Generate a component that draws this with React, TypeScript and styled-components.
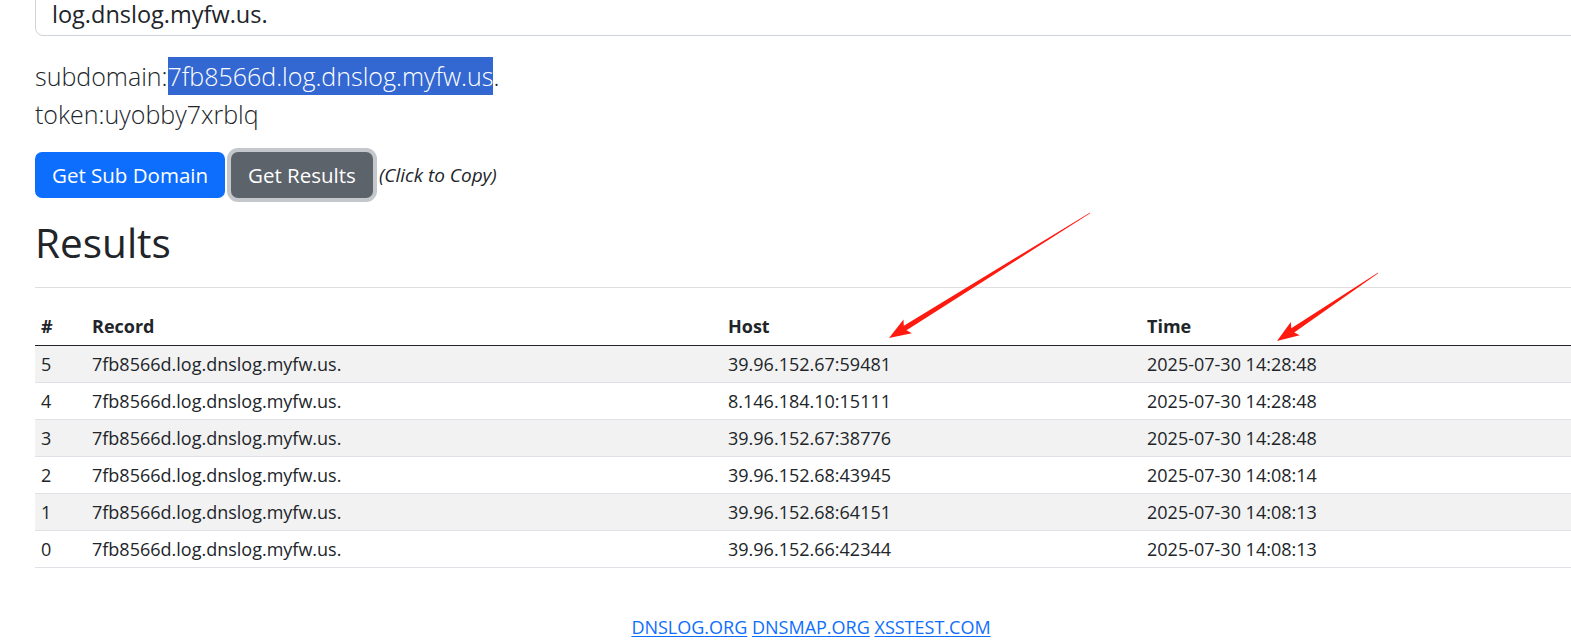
import React from "react";
import styled, { createGlobalStyle } from "styled-components";

const GlobalStyle = createGlobalStyle`
  html, body {
    margin: 0;
    padding: 0;
    background: #ffffff;
    overflow: hidden;
  }
  body {
    font-family: "Open Sans", "Noto Sans", "Segoe UI", sans-serif;
    font-size: 18px;
    color: #212529;
  }
  * { box-sizing: border-box; }
`;

const Page = styled.div`
  position: relative;
  display: flow-root;
  width: 1622px;
  min-height: 642px;
  padding: 0 35px;
`;

const DomainInput = styled.div`
  margin-top: -8px;
  height: 44px;
  border: 1px solid #ced4da;
  border-radius: 8px;
  padding: 0 16px;
  display: flex;
  align-items: center;
  font-size: 23.5px;
  color: #212529;
`;

const Lead = styled.div`
  margin-top: 21px;
  font-size: 25px;
  font-weight: 300;
  line-height: 38px;
  color: #212529;
`;

const Selected = styled.span`
  display: inline-block;
  background: #3367d1;
  color: #ffffff;
  line-height: 38px;
`;

const ButtonRow = styled.div`
  margin-top: 19px;
  display: flex;
  align-items: center;
  gap: 6px;
`;

const Button = styled.button<{ $variant: "primary" | "secondary" }>`
  height: 46px;
  padding: 0 17px;
  border: none;
  border-radius: 7px;
  font-family: inherit;
  font-size: 20.5px;
  color: #ffffff;
  background: ${(p) => (p.$variant === "primary" ? "#0d6efd" : "#5c636a")};
  box-shadow: ${(p) =>
    p.$variant === "secondary" ? "0 0 0 4px #c4c7cb" : "none"};
  cursor: pointer;
`;

const Hint = styled.em`
  font-size: 19px;
  font-style: italic;
`;

const Heading = styled.h1`
  margin: 20px 0 0;
  font-size: 40.5px;
  font-weight: 400;
  line-height: 49px;
`;

const Rule = styled.hr`
  margin: 20px 0 0;
  border: none;
  border-top: 1px solid #dedede;
`;

const Table = styled.table`
  margin-top: 19px;
  width: 100%;
  border-collapse: collapse;
  table-layout: fixed;
`;

const HeadCell = styled.th<{ $w: number }>`
  width: ${(p) => p.$w}px;
  height: 38px;
  padding: 0 6px;
  text-align: left;
  font-weight: 700;
  vertical-align: middle;
  border-bottom: 1px solid #212529;
`;

const Row = styled.tr<{ $striped: boolean }>`
  background: ${(p) => (p.$striped ? "#f2f2f2" : "#ffffff")};
  border-bottom: 1px solid #dee2e6;
`;

const Cell = styled.td`
  height: 37px;
  padding: 0 6px;
  vertical-align: middle;
  white-space: nowrap;
`;

const Footer = styled.div`
  margin-top: 46px;
  text-align: center;
  font-size: 18px;
  line-height: 27px;
`;

const FooterLink = styled.a`
  color: #0d6efd;
  text-decoration: underline;
  text-underline-offset: 2px;
`;

const Overlay = styled.svg`
  position: absolute;
  left: 0;
  top: 0;
  pointer-events: none;
`;

type Pt = [number, number];

function arrowPoints(tail: Pt, tip: Pt): string {
  const dx = tip[0] - tail[0];
  const dy = tip[1] - tail[1];
  const len = Math.hypot(dx, dy);
  const ux = dx / len;
  const uy = dy / len;
  const nx = -uy;
  const ny = ux;
  const headLen = 19;
  const headW = 8;
  const shaftW = 2.6;
  const bx = tip[0] - ux * headLen;
  const by = tip[1] - uy * headLen;
  const pts: Pt[] = [
    [tail[0] + nx * 0.3, tail[1] + ny * 0.3],
    [bx + nx * shaftW, by + ny * shaftW],
    [bx - ux * 3 + nx * headW, by - uy * 3 + ny * headW],
    tip,
    [bx - ux * 3 - nx * headW, by - uy * 3 - ny * headW],
    [bx - nx * shaftW, by - ny * shaftW],
    [tail[0] - nx * 0.3, tail[1] - ny * 0.3],
  ];
  return pts.map((p) => `${p[0].toFixed(1)},${p[1].toFixed(1)}`).join(" ");
}

const rows = [
  { id: 5, host: "39.96.152.67:59481", time: "2025-07-30 14:28:48" },
  { id: 4, host: "8.146.184.10:15111", time: "2025-07-30 14:28:48" },
  { id: 3, host: "39.96.152.67:38776", time: "2025-07-30 14:28:48" },
  { id: 2, host: "39.96.152.68:43945", time: "2025-07-30 14:08:14" },
  { id: 1, host: "39.96.152.68:64151", time: "2025-07-30 14:08:13" },
  { id: 0, host: "39.96.152.66:42344", time: "2025-07-30 14:08:13" },
];

export default function App() {
  return (
    <>
      <GlobalStyle />
      <Page>
        <DomainInput>log.dnslog.myfw.us.</DomainInput>
        <Lead>
          <div>
            subdomain:<Selected>7fb8566d.log.dnslog.myfw.us</Selected>.
          </div>
          <div>token:uyobby7xrblq</div>
        </Lead>
        <ButtonRow>
          <Button $variant="primary">Get Sub Domain</Button>
          <Button $variant="secondary">Get Results</Button>
          <Hint>(Click to Copy)</Hint>
        </ButtonRow>
        <Heading>Results</Heading>
        <Rule />
        <Table>
          <thead>
            <tr>
              <HeadCell $w={51}>#</HeadCell>
              <HeadCell $w={636}>Record</HeadCell>
              <HeadCell $w={419}>Host</HeadCell>
              <HeadCell $w={446}>Time</HeadCell>
            </tr>
          </thead>
          <tbody>
            {rows.map((r, i) => (
              <Row key={r.id} $striped={i % 2 === 0}>
                <Cell>{r.id}</Cell>
                <Cell>7fb8566d.log.dnslog.myfw.us.</Cell>
                <Cell>{r.host}</Cell>
                <Cell>{r.time}</Cell>
              </Row>
            ))}
          </tbody>
        </Table>
        <Footer>
          <FooterLink href="#">DNSLOG.ORG</FooterLink>{" "}
          <FooterLink href="#">DNSMAP.ORG</FooterLink>{" "}
          <FooterLink href="#">XSSTEST.COM</FooterLink>
        </Footer>
        <Overlay width="1571" height="642" viewBox="0 0 1571 642">
          <polygon points={arrowPoints([1090, 213], [889, 338])} fill="#ff1a10" />
          <polygon points={arrowPoints([1378, 273], [1277, 341])} fill="#ff1a10" />
        </Overlay>
      </Page>
    </>
  );
}
